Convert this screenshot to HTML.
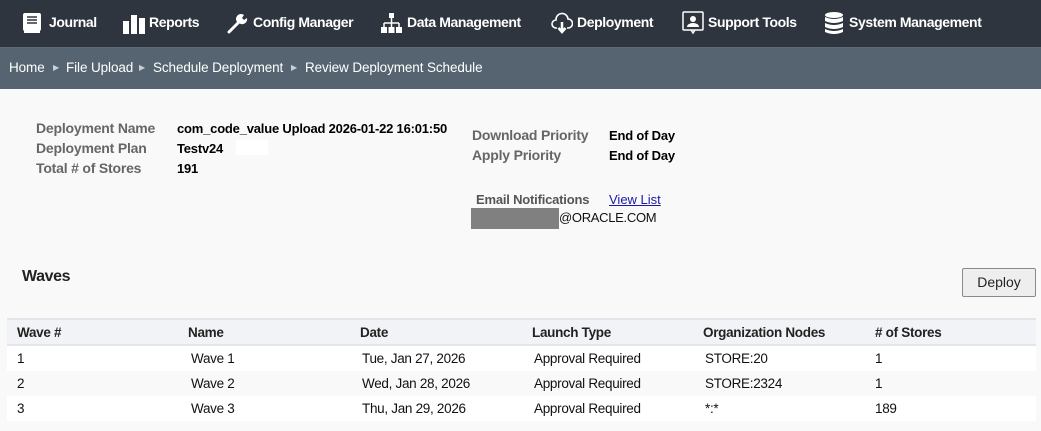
<!DOCTYPE html>
<html><head><meta charset="utf-8"><style>
*{margin:0;padding:0;box-sizing:border-box}
body{width:1041px;height:431px;background:#f9f9f9;font-family:"Liberation Sans",sans-serif;position:relative;overflow:hidden;color:#111}
.nav{position:absolute;left:0;top:0;width:1041px;height:47px;background:#2e353e}
.bc{position:absolute;left:0;top:47px;width:1041px;height:42px;background:#556470;border-top:1px solid #5d6b76}
.a{position:absolute;white-space:nowrap}
.ni{color:#fff;font-weight:bold;font-size:14px;top:14px;letter-spacing:-0.4px}
.bt{color:#fff;font-size:13.5px;top:60px;letter-spacing:-0.1px}
.arr{color:#c9d0d5;font-size:8px;top:63px}
.lb{color:#666;font-weight:bold;font-size:14px;letter-spacing:-0.2px}
.vl{color:#000;font-weight:bold;font-size:13px;letter-spacing:-0.2px}
.tbl{position:absolute;left:7px;top:318px;width:1029px}
.row{height:25px;position:relative;font-size:13.5px;letter-spacing:-0.3px}
.row span{position:absolute;top:5px}
.hd{background:#f1f3f6;border-top:2px solid #e2e5ea;border-bottom:2px solid #e2e5ea;height:28px;font-weight:bold;color:#222}
.hd span{top:5px}
</style></head><body>
<div class="nav">
<svg class="a" style="left:22px;top:12px" width="20" height="22" viewBox="0 0 20 22"><rect x="1" y="1" width="18" height="18" rx="2" fill="#fff"/><rect x="2" y="19" width="16" height="2" fill="#fff"/><g stroke="#2e353e" stroke-width="1.5"><line x1="5" y1="5" x2="15" y2="5"/><line x1="5" y1="8" x2="15" y2="8"/><line x1="5" y1="11" x2="15" y2="11"/></g></svg>
<span class="a ni" style="left:49px">Journal</span>
<svg class="a" style="left:123px;top:12px" width="22" height="22"><rect x="0" y="9" width="6" height="13" fill="#fff"/><rect x="8" y="3" width="6" height="19" fill="#fff"/><rect x="16" y="6" width="6" height="16" fill="#fff"/></svg>
<span class="a ni" style="left:149px">Reports</span>
<svg class="a" style="left:227px;top:12px" width="22" height="22" viewBox="0 0 22 22"><path d="M2 20 L12 10" stroke="#fff" stroke-width="3" stroke-linecap="round"/><path d="M11 11 A5 5 0 0 1 17 3 L15 6 L17 8 L20 6 A5 5 0 0 1 12 11Z" fill="#fff"/></svg>
<span class="a ni" style="left:253px">Config Manager</span>
<svg class="a" style="left:381px;top:12px" width="21" height="22"><rect x="8" y="1" width="5" height="5" fill="#fff"/><path d="M10.5 6V11M3 11H18M3 11V15M10.5 11V15M18 11V15" stroke="#fff" stroke-width="1.5" fill="none"/><rect x="0" y="15" width="6" height="6" fill="#fff"/><rect x="7.5" y="15" width="6" height="6" fill="#fff"/><rect x="15" y="15" width="6" height="6" fill="#fff"/></svg>
<span class="a ni" style="left:407px">Data Management</span>
<svg class="a" style="left:551px;top:11px" width="22" height="24" viewBox="0 0 22 24"><path d="M6 17 H5 A4 4 0 0 1 5 9 A6 6 0 0 1 17 8 A4.5 4.5 0 0 1 17 17 H16" stroke="#fff" stroke-width="1.6" fill="none"/><path d="M11 11 V20 M7.5 17 L11 21 L14.5 17" stroke="#fff" stroke-width="2.5" fill="none"/></svg>
<span class="a ni" style="left:577px">Deployment</span>
<svg class="a" style="left:682px;top:11px" width="22" height="24"><rect x="1" y="1" width="20" height="18" rx="1" stroke="#fff" stroke-width="1.5" fill="none"/><path d="M9 19 L11 22 L13 19" stroke="#fff" stroke-width="1.5" fill="none"/><circle cx="11" cy="8" r="3" fill="#fff"/><path d="M5 16 A6 4 0 0 1 17 16Z" fill="#fff"/></svg>
<span class="a ni" style="left:708px">Support Tools</span>
<svg class="a" style="left:825px;top:11px" width="18" height="24"><ellipse cx="9" cy="4" rx="9" ry="3" fill="#fff"/><path d="M0 6 Q9 10 18 6 V10 Q9 14 0 10Z M0 12 Q9 16 18 12 V16 Q9 20 0 16Z M0 18 Q9 22 18 18 V21 Q9 25 0 21Z" fill="#fff"/></svg>
<span class="a ni" style="left:849px">System Management</span>
</div>
<div class="bc"></div>
<span class="a bt" style="left:9px">Home</span><span class="a arr" style="left:53px">▶</span>
<span class="a bt" style="left:66px">File Upload</span><span class="a arr" style="left:139px">▶</span>
<span class="a bt" style="left:153px">Schedule Deployment</span><span class="a arr" style="left:291px">▶</span>
<span class="a bt" style="left:305px">Review Deployment Schedule</span>

<span class="a lb" style="left:36px;top:120px">Deployment Name</span><span class="a vl" style="left:177px;top:121px">com_code_value Upload 2026-01-22 16:01:50</span>
<span class="a lb" style="left:36px;top:140px">Deployment Plan</span><span class="a vl" style="left:177px;top:141px">Testv24</span>
<div class="a" style="left:236px;top:140px;width:32px;height:15px;background:#fff"></div>
<span class="a lb" style="left:36px;top:160px">Total # of Stores</span><span class="a vl" style="left:177px;top:161px">191</span>
<span class="a lb" style="left:472px;top:127px">Download Priority</span><span class="a vl" style="left:609px;top:128px">End of Day</span>
<span class="a lb" style="left:472px;top:147px">Apply Priority</span><span class="a vl" style="left:609px;top:148px">End of Day</span>
<span class="a lb" style="left:476px;top:192px;color:#555;font-size:13px">Email Notifications</span>
<span class="a" style="left:609px;top:192px;font-size:13px;color:#1a1aa6;text-decoration:underline">View List</span>
<div class="a" style="left:471px;top:208px;width:88px;height:21px;background:#808080"></div>
<span class="a" style="left:559px;top:210px;font-size:13px;letter-spacing:-0.3px">@ORACLE.COM</span>

<span class="a" style="left:22px;top:268px;font-size:16px;font-weight:bold;color:#222;letter-spacing:-0.4px">Waves</span>
<div class="a" style="left:962px;top:268px;width:74px;height:29px;background:#eeeeee;border:1px solid #8a8a8a;border-radius:2px;font-size:14px;text-align:center;line-height:27px;color:#222">Deploy</div>

<div class="tbl">
<div class="row hd"><span style="left:10px">Wave #</span><span style="left:181px">Name</span><span style="left:353px">Date</span><span style="left:525px">Launch Type</span><span style="left:696px">Organization Nodes</span><span style="left:868px">&#35; of Stores</span></div>
<div class="row" style="background:#fff"><span style="left:10px">1</span><span style="left:184px">Wave 1</span><span style="left:355px">Tue, Jan 27, 2026</span><span style="left:527px">Approval Required</span><span style="left:698px">STORE:20</span><span style="left:868px">1</span></div>
<div class="row"><span style="left:10px">2</span><span style="left:184px">Wave 2</span><span style="left:355px">Wed, Jan 28, 2026</span><span style="left:527px">Approval Required</span><span style="left:698px">STORE:2324</span><span style="left:868px">1</span></div>
<div class="row" style="background:#fff"><span style="left:10px">3</span><span style="left:184px">Wave 3</span><span style="left:355px">Thu, Jan 29, 2026</span><span style="left:527px">Approval Required</span><span style="left:698px">*:*</span><span style="left:868px">189</span></div>
</div>
</body></html>
